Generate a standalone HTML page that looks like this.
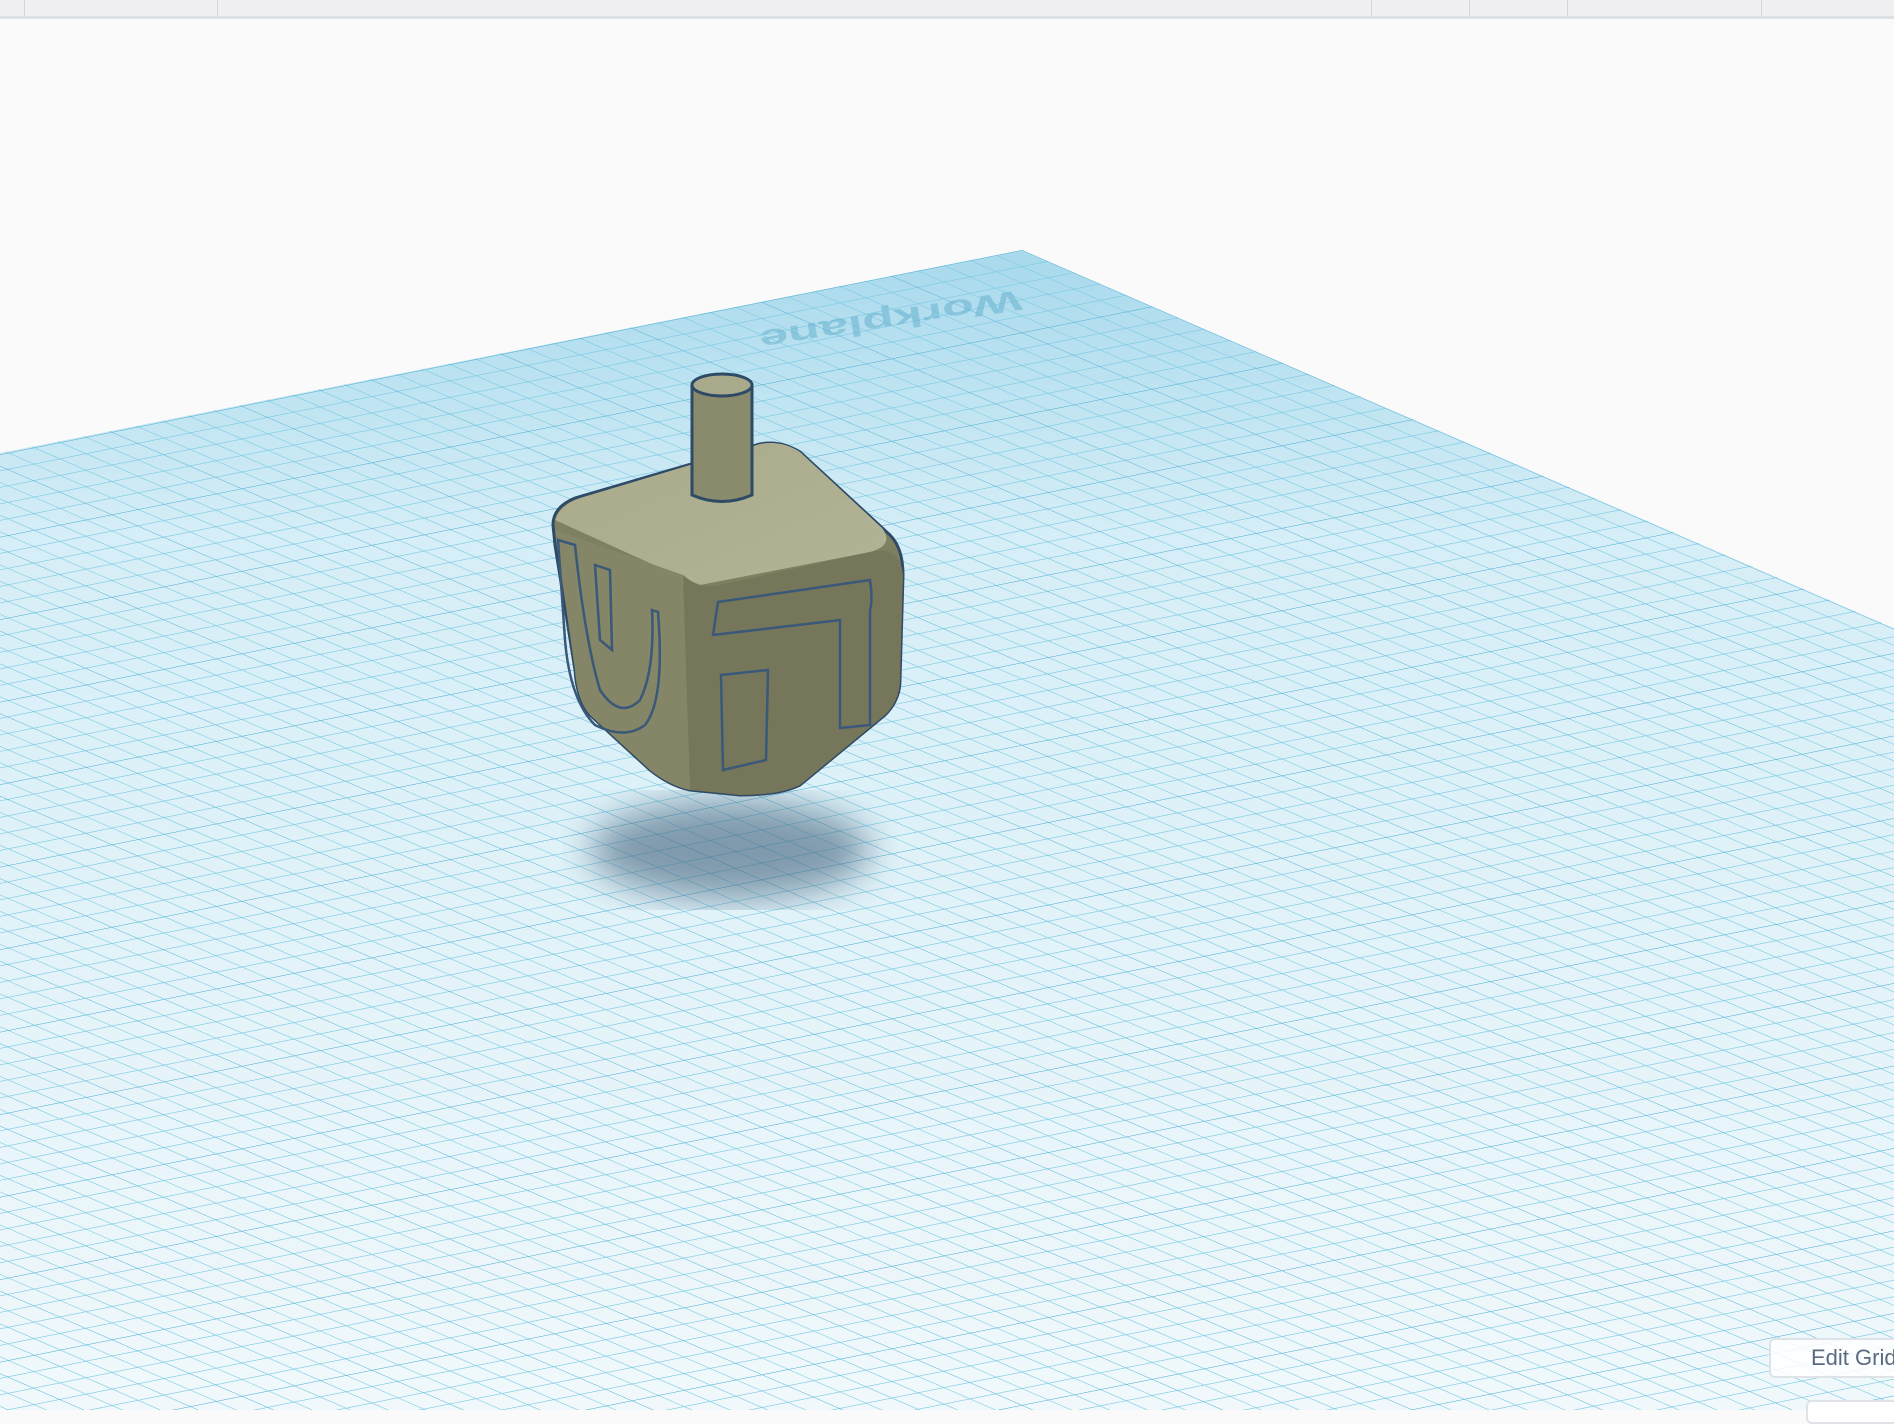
<!DOCTYPE html>
<html><head><meta charset="utf-8"><style>
html,body{margin:0;padding:0;width:1894px;height:1410px;overflow:hidden;background:#fafafa;font-family:"Liberation Sans",sans-serif}
.bar{position:absolute;left:0;top:0;width:1894px;height:16px;background:#f0f0f2;border-bottom:3px solid #dde1e6}
.bar i{position:absolute;top:0;width:1px;height:16px;background:#d4d6da}
.btn{position:absolute;left:1769px;top:1338px;width:140px;height:40px;background:rgba(255,255,255,.85);border:2px solid #dfe2e6;border-radius:6px;box-sizing:border-box;color:#5a6a7e;font-size:22px;line-height:36px;padding-left:40px}
.btn2{position:absolute;left:1806px;top:1400px;width:100px;height:20px;background:#fff;border:2px solid #dfe2e6;border-radius:6px}
</style></head><body>
<svg width="1894" height="1410" style="position:absolute;left:0;top:0">
<defs>
<pattern id="g" patternUnits="userSpaceOnUse" width="50" height="50" patternTransform="matrix(2.6 1.13 -2.6 0.52 1022 250)">
<path d="M0 0V50M10 0V50M20 0V50M30 0V50M40 0V50M0 0H50M0 10H50M0 20H50M0 30H50M0 40H50" stroke="#7ccbe4" stroke-width="0.4" fill="none"/>
<path d="M0 0V50M0 0H50" stroke="#5ab4d6" stroke-width="0.7" fill="none"/>
</pattern>
<linearGradient id="fade" x1="0" y1="250" x2="0" y2="1410" gradientUnits="userSpaceOnUse">
<stop offset="0" stop-color="#a8d9ec"/><stop offset="0.25" stop-color="#d6eef7"/><stop offset="1" stop-color="#f0f8fb"/>
</linearGradient>
<filter id="bl"><feGaussianBlur stdDeviation="18"/></filter>
<linearGradient id="top" x1="0" y1="0" x2="1" y2="1"><stop offset="0" stop-color="#a9aa8c"/><stop offset="1" stop-color="#b3b496"/></linearGradient>
</defs>
<polygon points="1022,250 1894,628 1894,1410 0,1410 0,453" fill="url(#fade)"/>
<polygon points="1022,250 1894,628 1894,1410 0,1410 0,453" fill="url(#g)"/>
<text x="0" y="0" transform="translate(1020,290) rotate(171) scale(1,0.55)" font-size="52" font-weight="bold" fill="#6fb6d2" opacity="0.6" font-family="Liberation Sans">Workplane</text>
<ellipse cx="730" cy="850" rx="140" ry="50" fill="#40607a" opacity="0.6" filter="url(#bl)"/>
<path d="M553,525 Q553,507 575,498 L760,444 Q780,440 800,452 L890,535 Q903,548 903,575 L900,680 Q900,700 885,715 L800,785 Q780,795 740,795 L690,790 Q670,786 650,770 L590,715 Q577,700 575,670 L555,545 Z" fill="#7f7f62" stroke="#2e4a66" stroke-width="3"/>
<path d="M555,520 Q560,505 580,498 L760,444 Q782,440 800,452 L882,528 Q895,545 870,552 L700,585 Q680,590 665,570 Z" fill="url(#top)"/>
<path d="M683,575 Q700,590 720,585 L870,552 Q900,545 903,575 L900,680 Q900,700 885,715 L800,785 Q780,795 740,795 L690,790 Z" fill="#76765a"/>
<path d="M555,530 L683,575 L690,790 Q670,786 650,770 L590,715 Q577,700 575,670 Z" fill="#858568"/>
<path d="M692,385 L692,495 Q722,508 752,495 L752,385 Z" fill="#8a8a6c" stroke="#2e4a66" stroke-width="3"/>
<ellipse cx="722" cy="385" rx="30" ry="11" fill="#a9aa8c" stroke="#2e4a66" stroke-width="3"/>
<path d="M718,602 L870,580 Q873,600 870,610 L870,725 L840,728 L840,620 L713,635 Z" fill="none" stroke="#3a5878" stroke-width="2.5"/>
<path d="M721,675 L768,670 L766,760 L723,770 Z" fill="none" stroke="#3a5878" stroke-width="2.5"/>
<path d="M558,540 L575,545 Q585,640 600,690 Q620,720 640,700 Q655,670 652,610 L658,612 Q665,700 645,725 Q625,740 595,725 Q570,700 565,640 Z" fill="none" stroke="#3a5878" stroke-width="2.5"/>
<path d="M595,565 L610,570 L612,650 L600,640 Z" fill="none" stroke="#3a5878" stroke-width="2.5"/>
</svg>
<div class="bar"><i style="left:24px"></i><i style="left:217px"></i><i style="left:1371px"></i><i style="left:1469px"></i><i style="left:1567px"></i><i style="left:1761px"></i></div>
<div class="btn">Edit Grid</div>
<div class="btn2"></div>
</body></html>
